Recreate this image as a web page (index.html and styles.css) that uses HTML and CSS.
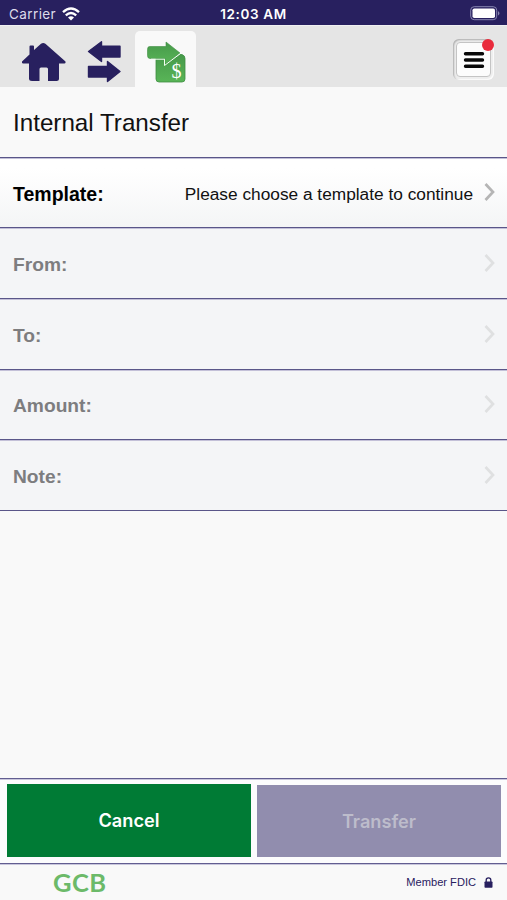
FILE: index.html
```html
<!DOCTYPE html>
<html lang="en">
<head>
  <meta charset="UTF-8">
  <meta name="viewport" content="width=device-width, initial-scale=1.0">
  <title>Internal Transfer</title>
  <link rel="stylesheet" href="styles.css">
</head>
<body>
  <div class="app">
    <div class="status-bar">
      <div class="carrier">
        <span>Carrier</span>
        <svg width="18" height="14" viewBox="0 0 18 14" fill="none" stroke="#fff" stroke-width="2.4">
          <path d="M1 5.2Q9-2 17 5.2"/>
          <path d="M3.8 8.4Q9 3.8 14.2 8.4"/>
          <path d="M9 13.6L6 10.5Q9 8 12 10.5Z" fill="#fff" stroke="none"/>
        </svg>
      </div>
      <div class="time">12:03 AM</div>
      <svg class="battery" width="31" height="15" viewBox="0 0 31 15">
        <rect x=".7" y=".7" width="26" height="13" rx="3.5" fill="none" stroke="#8885b0"/>
        <rect x="2.5" y="2.5" width="22.5" height="9.5" rx="1.8" fill="#fff"/>
        <path d="M28 5q3 2.3 0 4.6z" fill="#8885b0"/>
      </svg>
    </div>

    <nav class="tabs">
      <a class="tab tab-home">
        <svg width="46" height="41" viewBox="0 0 46 41" fill="#28205f">
          <path d="M8.500 5.500q0-1 1-1H12q1 0 1 1v3.500L20 2.800q2.200-1.800 4.400 0L44.500 20.500q.5 2-1 2H38v15q0 2.500-2.500 2.500H27V28q0-1.500-1.500-1.500H20q-1.500 0-1.500 1.500v12H11q-3 0-3-2.500v-15H2q-1.500 0-1-2l7.500-7z"/>
        </svg>
      </a>
      <a class="tab tab-arrows">
        <svg width="34" height="43" viewBox="0 0 34 43" fill="#28205f" stroke="#28205f" stroke-width="1.400" stroke-linejoin="round">
          <path d="M1.500 11.500L14.500 1.700v4.600H33V17H14.500V21.500z"/>
          <path d="M33 31.500L20.500 21.500v5H1.500V37h19V41.500z"/>
        </svg>
      </a>
      <a class="tab tab-active">
        <svg width="40" height="43" viewBox="0 0 40 43">
          <defs>
            <linearGradient id="leaf" x1="0" y1="0" x2="0" y2="1">
              <stop offset="0" stop-color="#46994a"/>
              <stop offset="1" stop-color="#59b557"/>
            </linearGradient>
          </defs>
          <path d="M9 17h7.500l2 6L33 13.500h2q3 1 3 4V38q0 3-3 3H12q-3 0-3-3z" fill="url(#leaf)" stroke="#3f8e43" stroke-width=".8"/>
          <path d="M2.500 5.500H19V1L33 12 18 23.500v-6H3Q.5 17.500.5 14.500v-6q0-3 2-3z" fill="url(#leaf)" stroke="#3f8e43" stroke-width=".6"/>
          <path d="M4 18.200h13.500v6.300L33.500 12.500" fill="none" stroke="#f3fff2" stroke-width="1"/>
          <text class="dollar" x="24.500" y="36.500" font-size="20">$</text>
        </svg>
      </a>
      <button class="menu-button">
        <span class="menu-face">
          <svg width="22" height="18" viewBox="0 0 22 18" stroke="#080808" stroke-width="3.400" stroke-linecap="round">
            <path d="M2.500 2.700h17M2.500 9h17M2.500 15.300h17"/>
          </svg>
        </span>
        <span class="badge"></span>
      </button>
    </nav>

    <h1 class="page-title">Internal Transfer</h1>

    <div class="form-rows">
      <div class="row row-enabled">
        <span class="label">Template:</span>
        <span class="value">Please choose a template to continue</span>
        <svg class="chevron" viewBox="0 0 12 18"><path d="M1.500 1L9 9 1.500 17"/></svg>
      </div>
      <div class="row">
        <span class="label">From:</span>
        <svg class="chevron" viewBox="0 0 12 18"><path d="M1.500 1L9 9 1.500 17"/></svg>
      </div>
      <div class="row">
        <span class="label">To:</span>
        <svg class="chevron" viewBox="0 0 12 18"><path d="M1.500 1L9 9 1.500 17"/></svg>
      </div>
      <div class="row">
        <span class="label">Amount:</span>
        <svg class="chevron" viewBox="0 0 12 18"><path d="M1.500 1L9 9 1.500 17"/></svg>
      </div>
      <div class="row">
        <span class="label">Note:</span>
        <svg class="chevron" viewBox="0 0 12 18"><path d="M1.500 1L9 9 1.500 17"/></svg>
      </div>
    </div>

    <div class="actions">
      <button class="btn btn-cancel">Cancel</button>
      <button class="btn btn-transfer" disabled>Transfer</button>
    </div>

    <footer>
      <span class="logo">GCB</span>
      <div class="member">
        <span>Member FDIC</span>
        <svg width="9" height="11" viewBox="0 0 9 11">
          <rect x=".5" y="4.500" width="8" height="6.300" rx=".7" fill="#28205f"/>
          <path d="M2.200 5V3q0-2.200 2.300-2.200T6.800 3v2" fill="none" stroke="#28205f" stroke-width="1.300"/>
        </svg>
      </div>
    </footer>
  </div>
</body>
</html>
```

FILE: styles.css
```css
* {
  box-sizing: border-box;
}
body {
  margin: 0;
  font-family: "Liberation Sans", Arial, sans-serif;
  background-color: #f9f9f9;
  color: #111;
}
button {
  font-family: inherit;
  border: none;
  padding: 0;
}
.app {
  display: flex;
  flex-direction: column;
  height: 900px;
  overflow: hidden;
}
/* Status bar */
.status-bar {
  display: grid;
  grid-template-columns: 1fr auto 1fr;
  align-items: center;
  height: 25px;
  flex: none;
  padding: 2px 6px 0 9px;
  background: #28205f;
  color: #fff;
  font-family: Inter, sans-serif;
  font-size: 13.5px;
}
.carrier {
  display: flex;
  align-items: center;
  gap: 6px;
  color: #dddbea;
  font-size: 13.5px;
  letter-spacing: 0.4px;
}
.time {
  margin-right: 3px;
  font-weight: 600;
  letter-spacing: 0.6px;
}
.battery {
  justify-self: end;
}
/* Tabs */
.tabs {
  display: flex;
  align-items: flex-end;
  height: 62px;
  flex: none;
  padding-right: 13px;
  background: #e5e5e5;
  border-top: 1px solid #f0f0f2;
}
.tab {
  display: flex;
}
.tab svg {
  display: block;
}
.tab-home {
  padding: 0 0 5px 21px;
}
.tab-arrows {
  padding: 0 0 4px 20px;
}
.tab-active {
  height: 56px;
  width: 61px;
  margin-left: 14px;
  padding: 10px 0 0 12px;
  background: #f9f9f9;
  border-radius: 5px 5px 0 0;
}
.dollar {
  font-family: "Liberation Serif", serif;
  fill: #fff;
}
.menu-button {
  position: relative;
  width: 41px;
  height: 41px;
  margin: 0 0 7px auto;
  padding: 3px;
  background: #eee;
  border-radius: 6px;
  box-shadow: inset 1px 1px 2px #aaa, inset -1px -1px 1px #fff;
}
.menu-face {
  display: flex;
  align-items: center;
  justify-content: center;
  height: 35px;
  background: #fcfcfc;
  border: 1px solid #c4c4c4;
  border-radius: 4px;
}
.badge {
  position: absolute;
  top: 0;
  right: 0;
  width: 12px;
  height: 12px;
  border-radius: 50%;
  background: #e92b3c;
}
.page-title {
  height: 70px;
  flex: none;
  margin: 0;
  padding-left: 13px;
  font-size: 24.2px;
  line-height: 71px;
  font-weight: normal;
}
/* Form */
.form-rows {
  border-top: 1px solid #5a5689;
}
.row {
  display: flex;
  align-items: center;
  height: 70.8px;
  padding: 4px 11px 0 13px;
  background: #f4f5f7;
  border-bottom: 1px solid #5a5689;
  box-shadow: inset 0 1px #c3c0d8;
  color: #7d7d7f;
}
.row-enabled {
  height: 70px;
  padding-top: 3px;
  background: linear-gradient(#fff 15%, #f4f5f6);
  color: #111;
}
.label {
  font-size: 19.2px;
  font-weight: bold;
}
.row-enabled .label {
  font-size: 19.5px;
  color: #000;
}
.value {
  margin-left: auto;
  font-size: 17.3px;
}
.chevron {
  width: 12px;
  height: 18px;
  margin: -4px 0 0 auto;
  fill: none;
  stroke: #dfe0e1;
  stroke-width: 2.7;
}
.row-enabled .chevron {
  margin-left: 11px;
  stroke: #b5b5b5;
}
/* Bottom buttons */
.actions {
  display: flex;
  gap: 6px;
  height: 86px;
  margin-top: auto;
  padding: 5px 6px 6px 7px;
  border-top: 1px solid #625e91;
  border-bottom: 1px solid #625e91;
  box-shadow: inset 0 1px #c9c7dc, 0 1px #c9c7dc;
  background: #fcfcfd;
}
.btn {
  flex: 1;
  font-family: Inter, sans-serif;
  font-size: 18.2px;
  font-weight: 600;
}
.btn-cancel {
  padding-bottom: 1px;
  background: #007b35;
  color: #fff;
}
.btn-transfer {
  margin-top: 1px;
  background: #918dae;
  color: #bdbccb;
}
footer {
  display: flex;
  align-items: center;
  justify-content: space-between;
  height: 36px;
  flex: none;
  padding: 0 14px 0 53px;
}
.logo {
  font-family: Lato, sans-serif;
  font-size: 25.5px;
  line-height: 34px;
  font-weight: bold;
  letter-spacing: 0.4px;
  color: #6cba69;
}
.member {
  display: flex;
  align-items: center;
  gap: 8px;
  color: #28205f;
  font-size: 11.1px;
}
```
